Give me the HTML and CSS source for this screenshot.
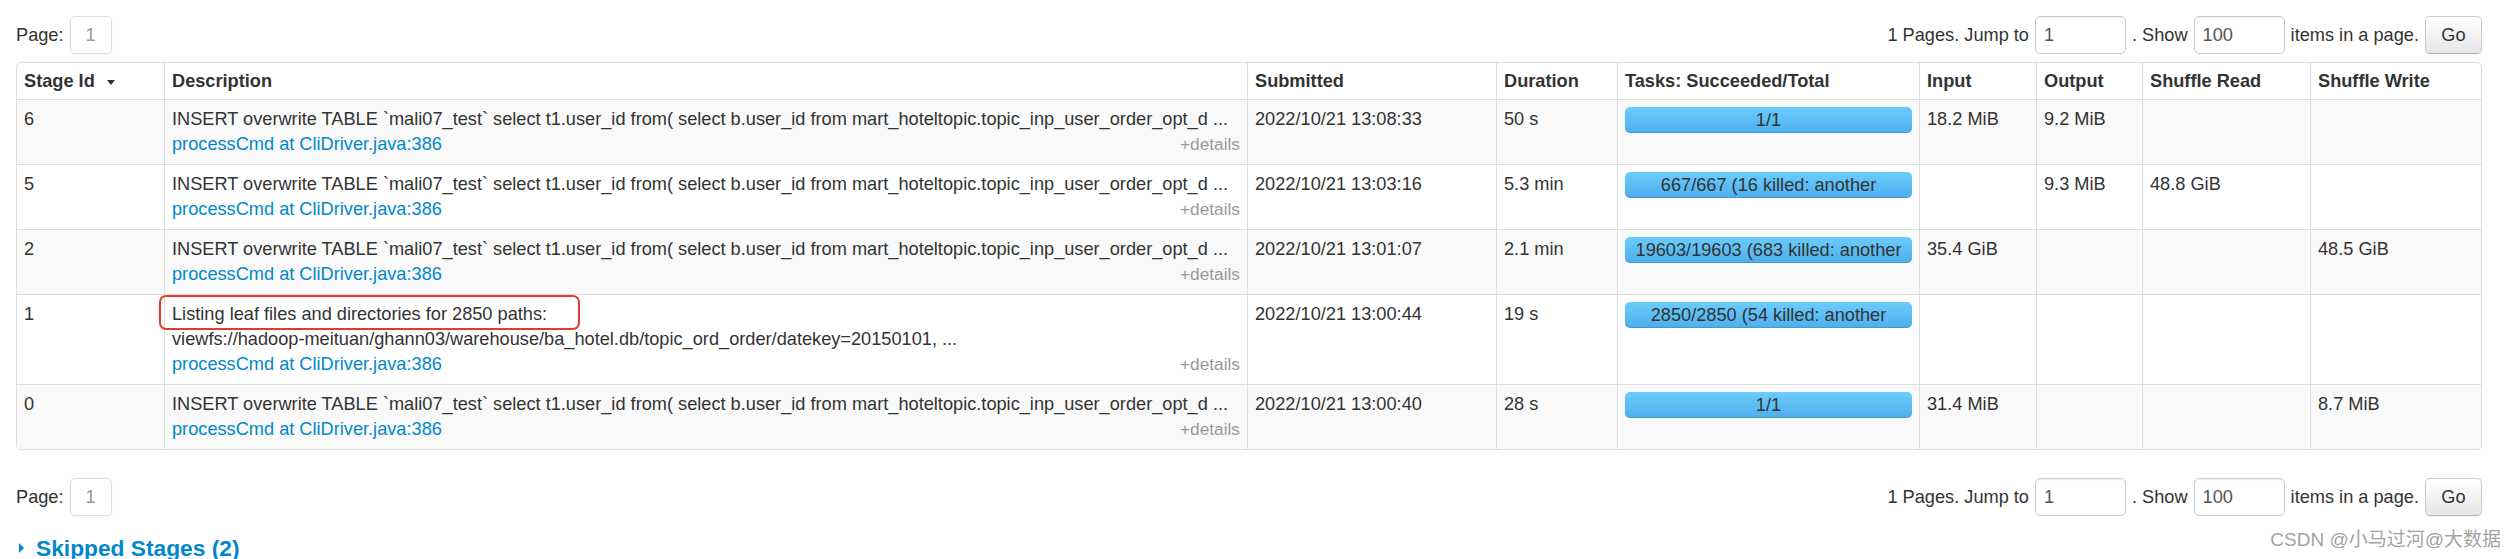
FILE: index.html
```html
<!DOCTYPE html>
<html lang="en">
<head>
<meta charset="utf-8">
<title>Stages</title>
<link rel="stylesheet" href="styles.css">
</head>
<body>
<div class="page">
  <div class="pager">
    <div class="pager-left"><span>Page:</span><span class="page-num">1</span></div>
    <div class="pager-right">
      <span>1 Pages. Jump to</span>
      <input class="pager-input" type="text" value="1">
      <span>. Show</span>
      <input class="pager-input" type="text" value="100">
      <span>items in a page.</span>
      <button class="btn">Go</button>
    </div>
  </div>

  <div class="table-wrap">
    <table class="stages">
      <colgroup>
        <col class="c-id"><col class="c-desc"><col class="c-sub"><col class="c-dur"><col class="c-tasks"><col class="c-in"><col class="c-out"><col class="c-sr"><col class="c-sw">
      </colgroup>
      <thead>
        <tr>
          <th>Stage Id<span class="sort-arrow"></span></th>
          <th>Description</th>
          <th>Submitted</th>
          <th>Duration</th>
          <th>Tasks: Succeeded/Total</th>
          <th>Input</th>
          <th>Output</th>
          <th>Shuffle Read</th>
          <th>Shuffle Write</th>
        </tr>
      </thead>
      <tbody>
        <tr>
          <td>6</td>
          <td>
            <div class="desc-text">INSERT overwrite TABLE `mali07_test` select t1.user_id from( select b.user_id from mart_hoteltopic.topic_inp_user_order_opt_d ...</div>
            <div class="desc-foot"><a class="name-link">processCmd at CliDriver.java:386</a><span class="details">+details</span></div>
          </td>
          <td>2022/10/21 13:08:33</td>
          <td>50 s</td>
          <td><div class="progress"><div class="progress-label">1/1</div></div></td>
          <td>18.2 MiB</td>
          <td>9.2 MiB</td>
          <td></td>
          <td></td>
        </tr>
        <tr>
          <td>5</td>
          <td>
            <div class="desc-text">INSERT overwrite TABLE `mali07_test` select t1.user_id from( select b.user_id from mart_hoteltopic.topic_inp_user_order_opt_d ...</div>
            <div class="desc-foot"><a class="name-link">processCmd at CliDriver.java:386</a><span class="details">+details</span></div>
          </td>
          <td>2022/10/21 13:03:16</td>
          <td>5.3 min</td>
          <td><div class="progress"><div class="progress-label">667/667 (16 killed: another</div></div></td>
          <td></td>
          <td>9.3 MiB</td>
          <td>48.8 GiB</td>
          <td></td>
        </tr>
        <tr>
          <td>2</td>
          <td>
            <div class="desc-text">INSERT overwrite TABLE `mali07_test` select t1.user_id from( select b.user_id from mart_hoteltopic.topic_inp_user_order_opt_d ...</div>
            <div class="desc-foot"><a class="name-link">processCmd at CliDriver.java:386</a><span class="details">+details</span></div>
          </td>
          <td>2022/10/21 13:01:07</td>
          <td>2.1 min</td>
          <td><div class="progress"><div class="progress-label">19603/19603 (683 killed: another</div></div></td>
          <td>35.4 GiB</td>
          <td></td>
          <td></td>
          <td>48.5 GiB</td>
        </tr>
        <tr>
          <td>1</td>
          <td>
            <div class="desc-text"><span class="annotated">Listing leaf files and directories for 2850 paths:</span></div>
            <div class="desc-text">viewfs://hadoop-meituan/ghann03/warehouse/ba_hotel.db/topic_ord_order/datekey=20150101, ...</div>
            <div class="desc-foot"><a class="name-link">processCmd at CliDriver.java:386</a><span class="details">+details</span></div>
          </td>
          <td>2022/10/21 13:00:44</td>
          <td>19 s</td>
          <td><div class="progress"><div class="progress-label">2850/2850 (54 killed: another</div></div></td>
          <td></td>
          <td></td>
          <td></td>
          <td></td>
        </tr>
        <tr>
          <td>0</td>
          <td>
            <div class="desc-text">INSERT overwrite TABLE `mali07_test` select t1.user_id from( select b.user_id from mart_hoteltopic.topic_inp_user_order_opt_d ...</div>
            <div class="desc-foot"><a class="name-link">processCmd at CliDriver.java:386</a><span class="details">+details</span></div>
          </td>
          <td>2022/10/21 13:00:40</td>
          <td>28 s</td>
          <td><div class="progress"><div class="progress-label">1/1</div></div></td>
          <td>31.4 MiB</td>
          <td></td>
          <td></td>
          <td>8.7 MiB</td>
        </tr>
      </tbody>
    </table>
  </div>

  <div class="pager pager-bottom">
    <div class="pager-left"><span>Page:</span><span class="page-num">1</span></div>
    <div class="pager-right">
      <span>1 Pages. Jump to</span>
      <input class="pager-input" type="text" value="1">
      <span>. Show</span>
      <input class="pager-input" type="text" value="100">
      <span>items in a page.</span>
      <button class="btn">Go</button>
    </div>
  </div>

  <h4 class="skipped"><span class="arrow-closed"></span><a class="skipped-link">Skipped Stages (2)</a></h4>

  <div class="csdn-mark">CSDN @小马过河@大数据</div>
</div>
</body>
</html>
```

FILE: styles.css
```css
html, body {
  margin: 0;
  padding: 0;
  background: #ffffff;
}

body {
  font-family: "Liberation Sans", Arial, "Noto Sans CJK SC", sans-serif;
  font-size: 18.2px;
  line-height: 25px;
  color: #333333;
}

.page {
  position: relative;
  padding: 16px 0 0 16px;
  box-sizing: border-box;
}

/* pagination bar */
.pager {
  display: flex;
  justify-content: space-between;
  align-items: center;
  width: 2466px;
  height: 38px;
}

.pager-left {
  display: flex;
  align-items: center;
  gap: 6px;
}

.page-num {
  display: inline-flex;
  align-items: center;
  justify-content: center;
  box-sizing: border-box;
  width: 42px;
  height: 38px;
  border: 1px solid #dddddd;
  border-radius: 5px;
  color: #999999;
  box-shadow: 0 1px 2px rgba(0, 0, 0, 0.05);
}

.pager-right {
  display: flex;
  align-items: center;
  gap: 6px;
}

.pager-input {
  box-sizing: border-box;
  width: 91px;
  height: 38px;
  margin: 0;
  padding: 5px 8px;
  border: 1px solid #cccccc;
  border-radius: 5px;
  font-family: inherit;
  font-size: 18.2px;
  line-height: 26px;
  color: #555555;
  background: #ffffff;
  box-shadow: inset 0 1px 1px rgba(0, 0, 0, 0.075);
  outline: none;
}

.btn {
  box-sizing: border-box;
  width: 57px;
  height: 38px;
  margin: 0;
  padding: 5px 0;
  border: 1px solid #cccccc;
  border-bottom-color: #b3b3b3;
  border-radius: 5px;
  font-family: inherit;
  font-size: 18.2px;
  line-height: 26px;
  color: #333333;
  background: linear-gradient(to bottom, #ffffff, #e6e6e6);
  box-shadow: inset 0 1px 0 rgba(255, 255, 255, 0.2), 0 1px 2px rgba(0, 0, 0, 0.05);
}

/* table */
.table-wrap {
  box-sizing: border-box;
  width: 2466px;
  margin-top: 8px;
  border: 1px solid #dddddd;
  border-radius: 5px;
  overflow: hidden;
}

.stages {
  width: 2464px;
  table-layout: fixed;
  border-collapse: separate;
  border-spacing: 0;
}

.c-id { width: 147px; }
.c-desc { width: 1083px; }
.c-sub { width: 249px; }
.c-dur { width: 121px; }
.c-tasks { width: 302px; }
.c-in { width: 117px; }
.c-out { width: 106px; }
.c-sr { width: 168px; }
.c-sw { width: 171px; }

.stages th,
.stages td {
  padding: 7px 7px;
  line-height: 25px;
  text-align: left;
  vertical-align: top;
  border-left: 1px solid #dddddd;
  border-top: 1px solid #dddddd;
  white-space: nowrap;
}

.stages th {
  padding: 5px 7px;
  line-height: 26px;
  border-top: none;
  font-weight: bold;
}

.stages th:first-child,
.stages td:first-child {
  border-left: none;
}

.stages tbody tr:nth-child(odd) td {
  background: #f9f9f9;
}

.sort-arrow {
  display: inline-block;
  width: 0;
  height: 0;
  margin-left: 12px;
  vertical-align: middle;
  border-left: 4.5px solid transparent;
  border-right: 4.5px solid transparent;
  border-top: 5px solid #333333;
}

.desc-text {
  white-space: nowrap;
}

.annotated {
  position: relative;
}

.annotated::after {
  content: "";
  position: absolute;
  left: -13px;
  top: -9px;
  width: 421px;
  height: 35px;
  box-sizing: border-box;
  border: 2.6px solid #e8392d;
  border-radius: 7px;
}

.desc-foot {
  display: flex;
  justify-content: space-between;
  align-items: baseline;
}

.name-link {
  color: #0088cc;
  text-decoration: none;
}

.details {
  font-size: 17.3px;
  color: #999999;
}

.progress {
  height: 26px;
  border-radius: 5px;
  background: linear-gradient(to bottom, #6acdfc 0%, #4eaeed 100%);
  box-shadow: inset 0 -1px 0 rgba(0, 0, 0, 0.12);
}

.progress-label {
  text-align: center;
  line-height: 26px;
  color: #333333;
}

/* bottom */
.pager-bottom {
  margin-top: 28px;
}

.skipped {
  margin: 20px 0 0 0;
  font-size: 22.75px;
  line-height: 24px;
  font-weight: bold;
  display: flex;
  align-items: center;
}

.arrow-closed {
  display: inline-block;
  width: 0;
  height: 0;
  margin-left: 3px;
  margin-right: 12px;
  border-top: 5px solid transparent;
  border-bottom: 5px solid transparent;
  border-left: 5px solid #0088cc;
}

.skipped-link {
  color: #0088cc;
  text-decoration: none;
}

.csdn-mark {
  position: absolute;
  right: 15px;
  top: 528px;
  font-family: "Liberation Sans", "Noto Sans CJK SC", sans-serif;
  font-size: 19px;
  line-height: 24px;
  color: #a3a3a3;
}
```
